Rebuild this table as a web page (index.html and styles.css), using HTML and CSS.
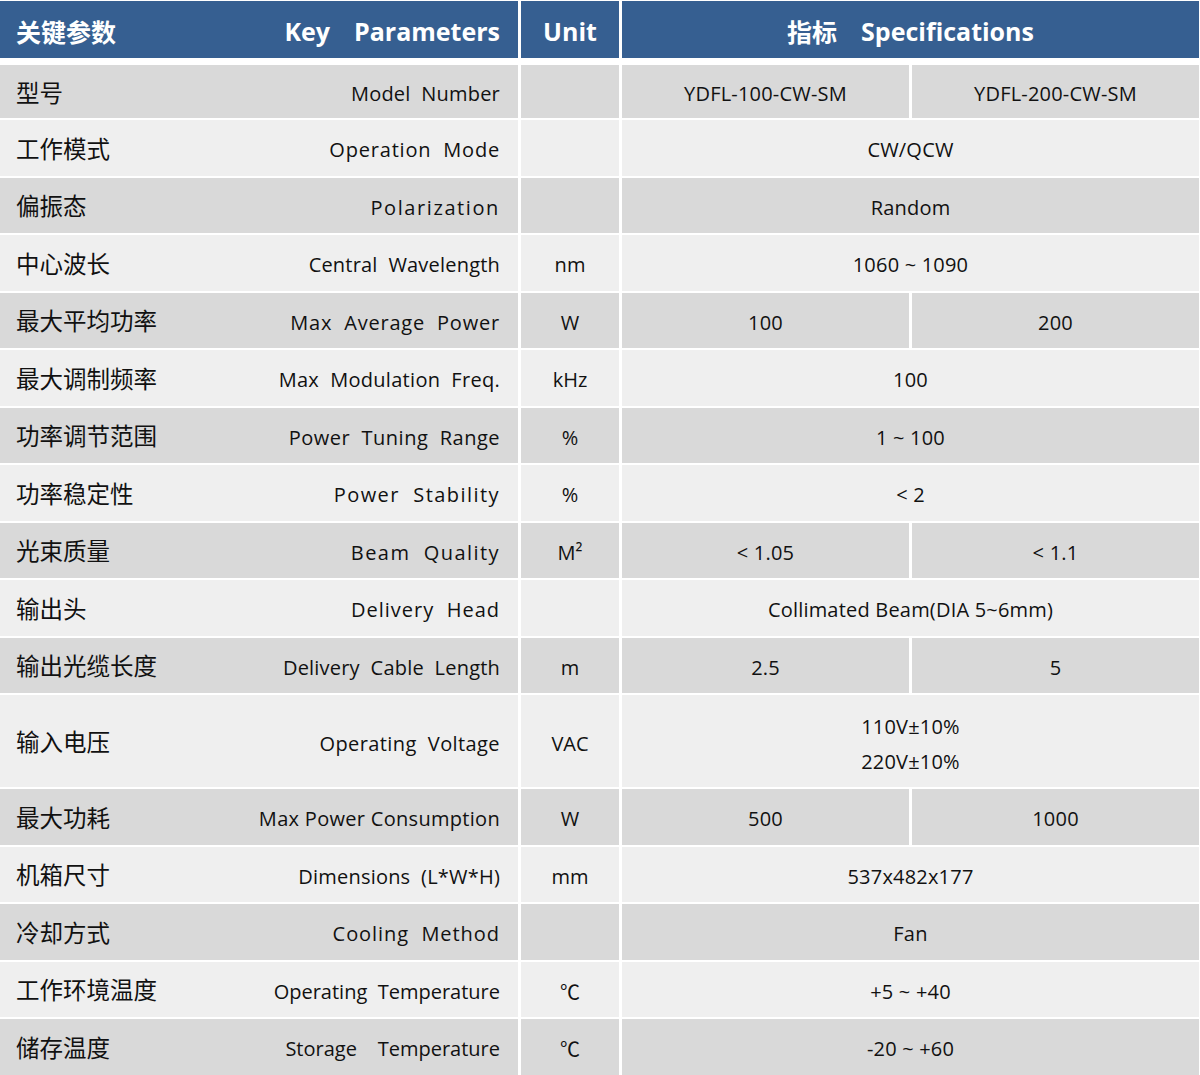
FILE: index.html
```html
<!DOCTYPE html>
<html lang="zh-CN">
<head>
<meta charset="utf-8">
<title>Key Parameters</title>
<link rel="stylesheet" href="styles.css">
</head>
<body>
<div class="sheet">
  <div class="hd hd-param"><span class="cn">关键参数</span><span class="en"><span class="w1">Key</span><span>Parameters</span></span></div>
  <div class="hd hd-unit">Unit</div>
  <div class="hd hd-spec span2"><span class="cn">指标</span><span class="en2">Specifications</span></div>

  <div class="param g"><span class="cn">型号</span><span class="en ls-02">Model&nbsp; Number</span></div>
  <div class="unit g"></div>
  <div class="val g">YDFL-100-CW-SM</div>
  <div class="val g">YDFL-200-CW-SM</div>

  <div class="param l"><span class="cn">工作模式</span><span class="en ls-08">Operation&nbsp; Mode</span></div>
  <div class="unit l"></div>
  <div class="val l span2">CW/QCW</div>

  <div class="param g"><span class="cn">偏振态</span><span class="en ls-16">Polarization</span></div>
  <div class="unit g"></div>
  <div class="val g span2">Random</div>

  <div class="param l"><span class="cn">中心波长</span><span class="en ls-02">Central&nbsp; Wavelength</span></div>
  <div class="unit l">nm</div>
  <div class="val l span2">1060 ~ 1090</div>

  <div class="param g"><span class="cn">最大平均功率</span><span class="en ls-08">Max&nbsp; Average&nbsp; Power</span></div>
  <div class="unit g">W</div>
  <div class="val g">100</div>
  <div class="val g">200</div>

  <div class="param l"><span class="cn">最大调制频率</span><span class="en ls-03">Max&nbsp; Modulation&nbsp; Freq.</span></div>
  <div class="unit l">kHz</div>
  <div class="val l span2">100</div>

  <div class="param g"><span class="cn">功率调节范围</span><span class="en ls-05">Power&nbsp; Tuning&nbsp; Range</span></div>
  <div class="unit g">%</div>
  <div class="val g span2">1 ~ 100</div>

  <div class="param l"><span class="cn">功率稳定性</span><span class="en ls-14">Power&nbsp; Stability</span></div>
  <div class="unit l">%</div>
  <div class="val l span2">&lt; 2</div>

  <div class="param g"><span class="cn">光束质量</span><span class="en ls-14">Beam&nbsp; Quality</span></div>
  <div class="unit g">M²</div>
  <div class="val g">&lt; 1.05</div>
  <div class="val g">&lt; 1.1</div>

  <div class="param l"><span class="cn">输出头</span><span class="en ls-10">Delivery&nbsp; Head</span></div>
  <div class="unit l"></div>
  <div class="val l span2">Collimated Beam(DIA 5~6mm)</div>

  <div class="param g"><span class="cn">输出光缆长度</span><span class="en ls-02">Delivery&nbsp; Cable&nbsp; Length</span></div>
  <div class="unit g">m</div>
  <div class="val g">2.5</div>
  <div class="val g">5</div>

  <div class="param l"><span class="cn">输入电压</span><span class="en ls-04">Operating&nbsp; Voltage</span></div>
  <div class="unit l">VAC</div>
  <div class="val l span2 stack"><span>110V±10%</span><span>220V±10%</span></div>

  <div class="param g"><span class="cn">最大功耗</span><span class="en ls-03">Max Power Consumption</span></div>
  <div class="unit g">W</div>
  <div class="val g">500</div>
  <div class="val g">1000</div>

  <div class="param l"><span class="cn">机箱尺寸</span><span class="en ls-02">Dimensions&nbsp; (L*W*H)</span></div>
  <div class="unit l">mm</div>
  <div class="val l span2">537x482x177</div>

  <div class="param g"><span class="cn">冷却方式</span><span class="en ls-09">Cooling&nbsp; Method</span></div>
  <div class="unit g"></div>
  <div class="val g span2">Fan</div>

  <div class="param l"><span class="cn">工作环境温度</span><span class="en ls-0">Operating&nbsp; Temperature</span></div>
  <div class="unit l">℃</div>
  <div class="val l span2">+5 ~ +40</div>

  <div class="param g"><span class="cn">储存温度</span><span class="en ls-0">Storage&nbsp;&nbsp;&nbsp; Temperature</span></div>
  <div class="unit g">℃</div>
  <div class="val g span2">-20 ~ +60</div>
</div>
</body>
</html>
```

FILE: styles.css
```css
html, body {
  margin: 0;
  padding: 0;
  background: #ffffff;
}

body {
  font-family: "Open Sans", "Noto Sans CJK SC", sans-serif;
  color: #111111;
  font-size: 20px;
}

.sheet {
  display: grid;
  width: 1199px;
  grid-template-columns: 518px 98px 287px 287px;
  grid-template-rows: 62px 53px repeat(10, 55.5px) 92px repeat(5, 55.5px);
  column-gap: 3px;
  row-gap: 2px;
  padding-top: 1px;
}

.span2 {
  grid-column: span 2;
}

.cn {
  font-family: "Noto Sans CJK SC", sans-serif;
  font-size: 23.5px;
}

.hd {
  background: #365f91;
  color: #ffffff;
  height: 57px;
  box-sizing: border-box;
  padding-top: 2px;
  display: flex;
  align-items: center;
  font-weight: 700;
  font-size: 25px;
}

.hd .cn {
  font-size: 25px;
  font-weight: 700;
}

.hd-param {
  justify-content: space-between;
  padding-left: 16px;
  padding-right: 18px;
}

.hd-unit {
  justify-content: center;
}

.hd-spec {
  justify-content: center;
}

.w1 {
  margin-right: 24px;
}

.en2 {
  margin-left: 24px;
}

.g {
  background: #d9d9d9;
}

.l {
  background: #efefef;
}

.param {
  display: flex;
  align-items: center;
  justify-content: space-between;
  padding: 0 18px 0 16px;
}

.param .en {
  margin-top: 4px;
}

.unit,
.val {
  display: flex;
  align-items: center;
  justify-content: center;
  padding-top: 4px;
}

.val {
  letter-spacing: 0.2px;
}

.stack {
  flex-direction: column;
  gap: 8px;
  padding-top: 6px;
}

.ls-0 { letter-spacing: 0; }
.ls-02 { letter-spacing: 0.2px; }
.ls-03 { letter-spacing: 0.3px; }
.ls-04 { letter-spacing: 0.4px; }
.ls-05 { letter-spacing: 0.5px; }
.ls-08 { letter-spacing: 0.8px; }
.ls-09 { letter-spacing: 0.95px; }
.ls-10 { letter-spacing: 1px; }
.ls-14 { letter-spacing: 1.45px; }
.ls-16 { letter-spacing: 1.6px; }
```
